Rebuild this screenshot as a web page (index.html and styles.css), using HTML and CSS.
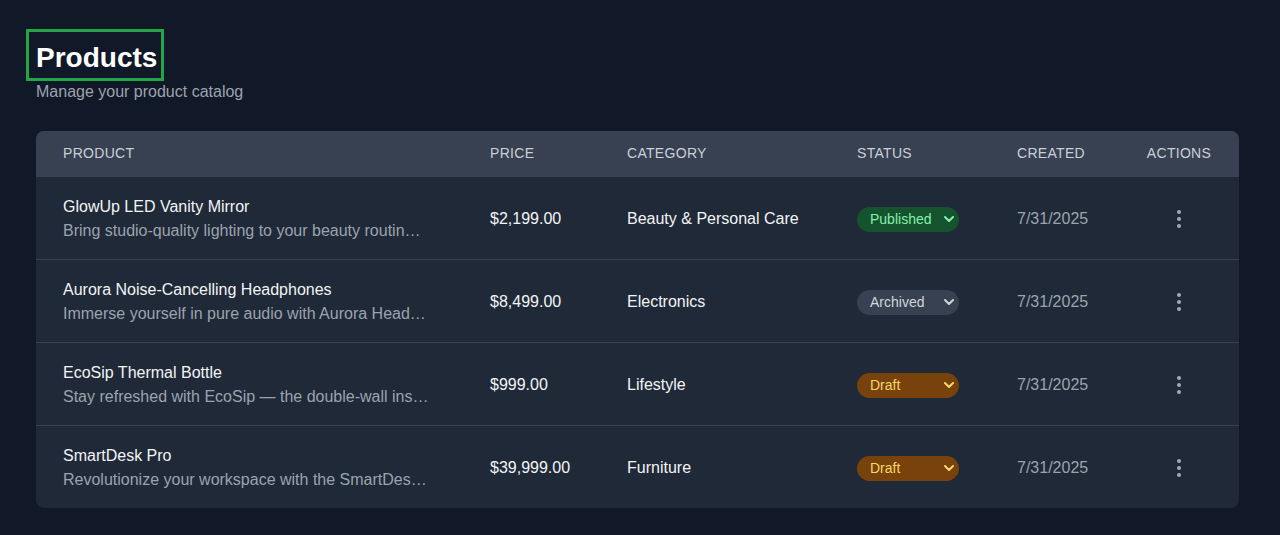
FILE: index.html
```html
<!DOCTYPE html>
<html lang="en">
<head>
<meta charset="utf-8">
<title>Products</title>
<link rel="stylesheet" href="styles.css">
</head>
<body>
<main class="page">
  <header class="page-head">
    <h1 class="title">Products</h1>
    <p class="subtitle">Manage your product catalog</p>
  </header>

  <section class="table">
    <div class="row head">
      <div class="cell">Product</div>
      <div class="cell">Price</div>
      <div class="cell">Category</div>
      <div class="cell">Status</div>
      <div class="cell">Created</div>
      <div class="cell actions">Actions</div>
    </div>

    <div class="row">
      <div class="cell product">
        <div class="name">GlowUp LED Vanity Mirror</div>
        <div class="desc">Bring studio-quality lighting to your beauty routin…</div>
      </div>
      <div class="cell strong">$2,199.00</div>
      <div class="cell strong">Beauty &amp; Personal Care</div>
      <div class="cell"><span class="pill published">Published<svg class="chev" viewBox="0 0 10 6"><polyline points="1,1 5,5 9,1"/></svg></span></div>
      <div class="cell muted">7/31/2025</div>
      <div class="cell actions"><svg class="kebab" viewBox="0 0 4 18"><circle cx="2" cy="2" r="2"/><circle cx="2" cy="9" r="2"/><circle cx="2" cy="16" r="2"/></svg></div>
    </div>

    <div class="row">
      <div class="cell product">
        <div class="name">Aurora Noise-Cancelling Headphones</div>
        <div class="desc">Immerse yourself in pure audio with Aurora Head…</div>
      </div>
      <div class="cell strong">$8,499.00</div>
      <div class="cell strong">Electronics</div>
      <div class="cell"><span class="pill archived">Archived<svg class="chev" viewBox="0 0 10 6"><polyline points="1,1 5,5 9,1"/></svg></span></div>
      <div class="cell muted">7/31/2025</div>
      <div class="cell actions"><svg class="kebab" viewBox="0 0 4 18"><circle cx="2" cy="2" r="2"/><circle cx="2" cy="9" r="2"/><circle cx="2" cy="16" r="2"/></svg></div>
    </div>

    <div class="row">
      <div class="cell product">
        <div class="name">EcoSip Thermal Bottle</div>
        <div class="desc">Stay refreshed with EcoSip — the double-wall ins…</div>
      </div>
      <div class="cell strong">$999.00</div>
      <div class="cell strong">Lifestyle</div>
      <div class="cell"><span class="pill draft">Draft<svg class="chev" viewBox="0 0 10 6"><polyline points="1,1 5,5 9,1"/></svg></span></div>
      <div class="cell muted">7/31/2025</div>
      <div class="cell actions"><svg class="kebab" viewBox="0 0 4 18"><circle cx="2" cy="2" r="2"/><circle cx="2" cy="9" r="2"/><circle cx="2" cy="16" r="2"/></svg></div>
    </div>

    <div class="row">
      <div class="cell product">
        <div class="name">SmartDesk Pro</div>
        <div class="desc">Revolutionize your workspace with the SmartDes…</div>
      </div>
      <div class="cell strong">$39,999.00</div>
      <div class="cell strong">Furniture</div>
      <div class="cell"><span class="pill draft">Draft<svg class="chev" viewBox="0 0 10 6"><polyline points="1,1 5,5 9,1"/></svg></span></div>
      <div class="cell muted">7/31/2025</div>
      <div class="cell actions"><svg class="kebab" viewBox="0 0 4 18"><circle cx="2" cy="2" r="2"/><circle cx="2" cy="9" r="2"/><circle cx="2" cy="16" r="2"/></svg></div>
    </div>
  </section>
</main>
</body>
</html>
```

FILE: styles.css
```css
* { box-sizing: border-box; }

html, body {
  margin: 0;
  background: #111827;
  font-family: "Liberation Sans", Arial, sans-serif;
  color: #f3f4f6;
}

.page {
  padding: 29px 41px 0 36px;
}

.title {
  display: inline-block;
  margin: 0 0 0 -10px;
  padding: 10px 4px 4px 7px;
  border: 3px solid #22a447;
  font-size: 28px;
  line-height: 32px;
  font-weight: 700;
  color: #ffffff;
}

.subtitle {
  margin: 0;
  font-size: 16px;
  line-height: 22px;
  color: #9ca3af;
}

.table {
  margin-top: 28px;
  background: #1f2937;
  border-radius: 8px;
  overflow: hidden;
}

.row {
  display: grid;
  grid-template-columns: 427px 137px 230px 160px 129px 1fr;
  align-items: center;
  padding: 18px 0 16px;
  border-bottom: 1px solid #374151;
}

.row:last-child {
  border-bottom: 0;
}

.row.head {
  background: #374151;
  padding: 12px 0 14px;
  border-bottom: 0;
}

.row.head .cell {
  font-size: 14px;
  line-height: 20px;
  text-transform: uppercase;
  letter-spacing: 0.3px;
  color: #cbd0d8;
}

.cell {
  padding-left: 27px;
  font-size: 16px;
  line-height: 24px;
  min-width: 0;
}

.cell.actions {
  padding-left: 0;
  display: flex;
  justify-content: center;
}

.name {
  color: #f3f4f6;
}

.desc {
  max-width: 380px;
  color: #9ca3af;
  white-space: nowrap;
  overflow: hidden;
  text-overflow: ellipsis;
}

.strong {
  color: #f3f4f6;
}

.muted {
  color: #9ca3af;
}

.pill {
  width: 102px;
  height: 25px;
  display: flex;
  align-items: center;
  justify-content: space-between;
  padding: 0 5px 0 13px;
  border-radius: 999px;
  font-size: 14px;
  line-height: 25px;
}

.chev {
  width: 10px;
  height: 6px;
  fill: none;
  stroke: currentColor;
  stroke-width: 2;
  stroke-linecap: round;
  stroke-linejoin: round;
}

.pill.published {
  background: #14532d;
  color: #86efac;
}

.pill.archived {
  background: #374151;
  color: #d1d5db;
}

.pill.draft {
  background: #77420b;
  color: #f8d66a;
}

.kebab {
  width: 4px;
  height: 18px;
  fill: #a3abb8;
}
```
